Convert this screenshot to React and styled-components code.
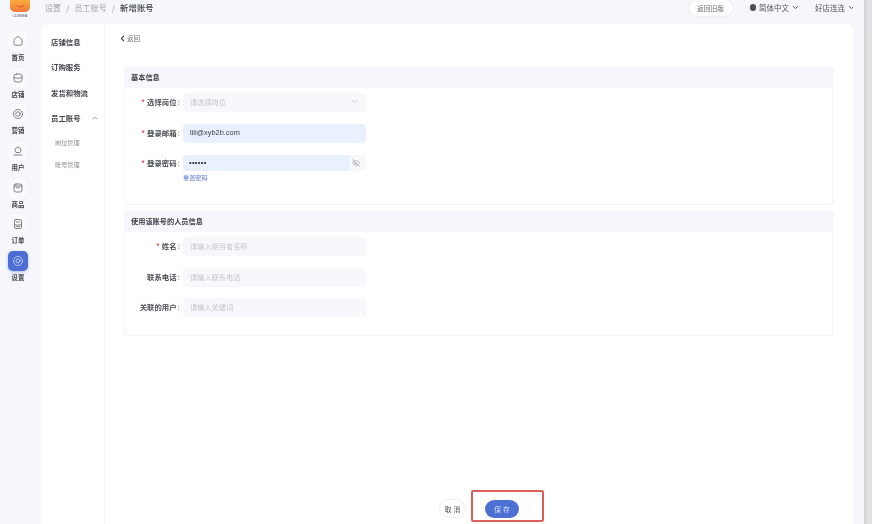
import React from "react";
import styled, { createGlobalStyle } from "styled-components";
import { ChevronDown, ChevronLeft, ChevronUp, EyeOff } from "lucide-react";

const Global = createGlobalStyle`
  html, body { margin: 0; padding: 0; width: 872px; height: 524px; overflow: hidden; background: #f6f7fc; }
  * { box-sizing: border-box; }
  #root { width: 872px; height: 524px; }
`;

const Page = styled.div`
  display: flex; width: 872px; height: 524px; overflow: hidden; background: #f6f7fc;
  font-family: "Noto Sans CJK SC", "Liberation Sans", sans-serif; color: #3c4048;
  filter: blur(0.5px);
`;
const Sidebar = styled.aside`
  width: 41px; flex: none; display: flex; flex-direction: column; align-items: center;
`;
const Logo = styled.div`
  width: 20px; height: 12px; margin-left: -1px; border-radius: 0 0 5px 5px;
  background: linear-gradient(180deg, #f8aa3c, #f2793a); display: flex; align-items: center; justify-content: center;
`;
const LogoText = styled.div`
  height: 6px; margin: 1px 0 12px -1px; font-size: 3.6px; line-height: 6px; color: #555; font-weight: 500;
  font-family: "Liberation Sans", sans-serif;
`;
const SideItem = styled.div`
  height: 36.7px; display: flex; flex-direction: column; align-items: center; margin-left: -5px;
`;
const Tile = styled.div`
  width: 20px; height: 20px; border-radius: 5px; display: flex; align-items: center; justify-content: center;
  background: ${p => (p.$active ? "#4c6dd3" : "#f9fafe")};
  color: ${p => (p.$active ? "#c8d3f5" : "#6b6f76")};
  box-shadow: ${p => (p.$active ? "0 1px 3px rgba(76,109,211,.45)" : "0 0 2px rgba(120,130,160,.1)")};
`;
const SideLabel = styled.div`
  margin-top: 2px; font-size: 6.4px; line-height: 9px; color: #3f434a; font-weight: 600;
`;
const Main = styled.div`
  width: 812px; flex: none; display: flex; flex-direction: column;
`;
const TopBar = styled.header`
  height: 24px; flex: none; display: flex; align-items: flex-start; font-size: 8px; line-height: 15px;
`;
const Crumbs = styled.nav`
  margin-left: 4px; flex: 1; display: flex; gap: 5px; letter-spacing: .1px; color: #a0a4ab;
`;
const CrumbNow = styled.span`
  color: #3f434a; font-weight: 500; font-size: 8.3px;
`;
const OldButton = styled.div`
  width: 44px; height: 16px; border-radius: 8px; background: #fff; text-align: center; font-size: 6.8px;
  line-height: 16px; color: #6a6e75; box-shadow: 0 0 2px rgba(80,90,120,.18); margin-right: 17px;
`;
const Menu = styled.div`
  display: flex; align-items: center; gap: 2px; height: 15px; font-size: 7.5px; color: #55595f; margin-right: ${p => p.$gap}px;
`;
const Dot = styled.span`
  width: 6.5px; height: 6.5px; border-radius: 50%; background: #4a4e58; margin-right: 1px;
`;
const Panel = styled.main`
  flex: 1; display: flex; background: #fff; border-radius: 7px 7px 0 0; min-height: 0;
`;
const SubNav = styled.nav`
  width: 64px; flex: none; border-right: 1px solid #f5f6f9; padding: 12px 0 0 10px;
`;
const NavItem = styled.div`
  height: 25.4px; font-size: 7.4px; line-height: 11px; font-weight: 600; color: #42464d; display: flex; gap: 10px;
`;
const NavChild = styled.div`
  height: 22px; padding: 0 0 0 4px; font-size: 6.2px; line-height: 10px; color: #8d9197;
`;
const Content = styled.section`
  flex: 1; display: flex; flex-direction: column; padding: 9px 20px 0 19px; min-width: 0;
`;
const Back = styled.div`
  height: 10px; margin-left: -6px; display: flex; align-items: center; font-size: 6.6px; color: #6d7177;
  margin-bottom: 24px;
`;
const Card = styled.div`
  height: ${p => p.$h}px; flex: none; border: 1px solid #f3f4f8; border-radius: 3px; margin-bottom: 6px; overflow: hidden;
`;
const CardHead = styled.div`
  height: 20px; background: #f6f7fb; padding-left: 6px; font-size: 7.2px; font-weight: 700; line-height: 19px; color: #3c4048;
`;
const Rows = styled.div`
  padding-top: ${p => p.$top}px; display: flex; flex-direction: column;
`;
const Row = styled.div`
  display: flex; align-items: flex-start; height: ${p => p.$h}px;
`;
const Label = styled.label`
  width: 58px; flex: none; text-align: right; padding-top: ${p => p.$pt || 3}px; padding-right: 3px; font-size: 7.4px; line-height: 11px; color: #4b4f56; font-weight: 600;
`;
const Star = styled.span`
  color: #e5525c; margin-right: 2px;
`;
const Colon = styled.span`
  color: #a7abb2; margin-left: 1px;
`;
const Field = styled.div`
  width: ${p => p.$w || 183}px; height: ${p => p.$h || 19}px; padding: 0 7px 2px; border-radius: 4px; display: flex; align-items: center; justify-content: space-between;
  font-size: ${p => (p.$value ? 7.4 : 7.2)}px; color: ${p => (p.$value ? "#3d4046" : "#c3c6cc")}; background: ${p => (p.$value ? "#e9f1fe" : "#f7f8fb")};
  font-family: ${p => (p.$value ? '"Liberation Sans", sans-serif' : "inherit")};
`;
const PasswordWrap = styled.div`
  width: 183px; display: flex; flex-direction: column;
`;
const PasswordBox = styled.div`
  height: 16px; border-radius: 4px; background: #f7f8fb; display: flex; align-items: center; color: #909399;
`;
const PasswordValue = styled.div`
  width: 167px; height: 16px; padding-left: 6px; background: #e9f1fe; border-radius: 4px 0 0 4px; color: #30343a;
  font: 700 7.5px/16px "Liberation Sans", sans-serif; letter-spacing: .3px; margin-right: 2px;
`;
const ResetLink = styled.a`
  font-size: 6.2px; line-height: 9px; color: #5b78cf; margin-top: 2px;
`;
const Spacer = styled.div`
  flex: 1;
`;
const Footer = styled.footer`
  height: 35px; flex: none; display: flex; align-items: flex-start; justify-content: flex-start; padding: 1px 0 0 315px;
`;
const CancelButton = styled.button`
  width: 27px; height: 19px; margin: 9px 0 0 0; padding: 0; border: 1px solid #eeeff3; border-radius: 10px; background: #fff; color: #62666c;
  font: 500 6.8px "Noto Sans CJK SC", sans-serif; letter-spacing: 2px; text-indent: 2px;
`;
const Highlight = styled.div`
  position: relative; width: 73px; height: 32px; margin-left: 5px; border: 2px solid #dc5f5c; border-radius: 2px; padding: 8px 0 0 12px;
  background: #fff;
`;
const SaveButton = styled.button`
  display: block; width: 34px; height: 18px; padding: 0; border: 0; border-radius: 9px; background: #4d70d3; color: #c9d4f5;
  font: 500 6.8px "Noto Sans CJK SC", sans-serif; letter-spacing: 2px; text-indent: 2px;
`;
const Gutter = styled.div`
  width: 11px; flex: none; background: #f7f7fd;
`;
const Edge = styled.div`
  width: 8px; flex: none; background: linear-gradient(90deg, #cfcfd1, #e3e3e5 45%, #dedee0);
`;

const stroke = { fill: "none", stroke: "currentColor", strokeWidth: 1.7, strokeLinecap: "round", strokeLinejoin: "round" };
const icons = {
  home: <path d="M4 10c0-2 5-6.500 8-6.500S20 8 20 10v8a2.500 2.500 0 0 1-2.500 2.500h-11A2.500 2.500 0 0 1 4 18Z" />,
  shop: <><rect x="4" y="4" width="16" height="16" rx="5" /><path d="M4 11c4 2 12 2 16 0" /></>,
  market: <><circle cx="12" cy="12" r="9" /><circle cx="12" cy="12" r="4.500" /></>,
  user: <><path d="M7.500 14.500a6 6 0 1 1 9 0Z" /><path d="M4 20h16" /></>,
  goods: <><rect x="4" y="4" width="16" height="16" rx="4" /><path d="M8 10c1 3 7 3 8 0M4 8h16" /></>,
  order: <><rect x="5" y="3" width="14" height="18" rx="3" /><path d="M5 14h14M9 8h6M9 17h6" /></>,
  settings: <><circle cx="12" cy="12" r="9" /><circle cx="12" cy="12" r="4" /></>,
};
const Icon = ({ name }) => <svg width="12" height="12" viewBox="0 0 24 24" {...stroke}>{icons[name]}</svg>;

const sideItems = [
  ["home", "首页"], ["shop", "店铺"], ["market", "营销"], ["user", "用户"],
  ["goods", "商品"], ["order", "订单"], ["settings", "设置", true],
];

export default function App() {
  return (
    <Page>
      <Global />
      <Sidebar>
        <Logo>
          <svg width="9" height="4" viewBox="0 0 9 4"><path d="M1 1c1.200 2.400 5.800 2.400 7 0" fill="none" stroke="#e0452f" strokeWidth="1" /></svg>
        </Logo>
        <LogoText>CDSBEA</LogoText>
        {sideItems.map(([icon, label, active]) => (
          <SideItem key={label}>
            <Tile $active={active}><Icon name={icon} /></Tile>
            <SideLabel>{label}</SideLabel>
          </SideItem>
        ))}
      </Sidebar>
      <Main>
        <TopBar>
          <Crumbs>
            <span>设置</span><span>/</span><span>员工账号</span><span>/</span><CrumbNow>新增账号</CrumbNow>
          </Crumbs>
          <OldButton>返回旧版</OldButton>
          <Menu $gap={15}><Dot />简体中文<ChevronDown size={9} strokeWidth={2.6} /></Menu>
          <Menu $gap={-3}>好店连连<ChevronDown size={9} strokeWidth={2.6} /></Menu>
        </TopBar>
        <Panel>
          <SubNav>
            <NavItem>店铺信息</NavItem>
            <NavItem>订购服务</NavItem>
            <NavItem>发货和物流</NavItem>
            <NavItem>员工账号<ChevronUp size={8} color="#70747a" style={{ marginTop: 2 }} /></NavItem>
            <NavChild>岗位管理</NavChild>
            <NavChild>账号管理</NavChild>
          </SubNav>
          <Content>
            <Back><ChevronLeft size={9} strokeWidth={3} color="#3f434a" />返回</Back>
            <Card $h={138}>
              <CardHead>基本信息</CardHead>
              <Rows $top={5}>
                <Row $h={31}>
                  <Label><Star>*</Star>选择岗位<Colon>:</Colon></Label>
                  <Field>请选择岗位<ChevronDown size={9} color="#b9bcc3" /></Field>
                </Row>
                <Row $h={31}>
                  <Label><Star>*</Star>登录邮箱<Colon>:</Colon></Label>
                  <Field $value>lili@xyb2b.com</Field>
                </Row>
                <Row $h={40}>
                  <Label $pt={2}><Star>*</Star>登录密码<Colon>:</Colon></Label>
                  <PasswordWrap>
                    <PasswordBox>
                      <PasswordValue>••••••</PasswordValue>
                      <EyeOff size={8} />
                    </PasswordBox>
                    <ResetLink>重置密码</ResetLink>
                  </PasswordWrap>
                </Row>
              </Rows>
            </Card>
            <Card $h={125}>
              <CardHead>使用该账号的人员信息</CardHead>
              <Rows $top={5}>
                <Row $h={31}>
                  <Label><Star>*</Star>姓名<Colon>:</Colon></Label>
                  <Field>请输入使用者名称</Field>
                </Row>
                <Row $h={30}>
                  <Label>联系电话<Colon>:</Colon></Label>
                  <Field>请输入联系电话</Field>
                </Row>
                <Row $h={30}>
                  <Label>关联的用户<Colon>:</Colon></Label>
                  <Field $w={184}>请输入关键词</Field>
                </Row>
              </Rows>
            </Card>
            <Spacer />
            <Footer>
              <CancelButton>取消</CancelButton>
              <Highlight><SaveButton>保存</SaveButton></Highlight>
            </Footer>
          </Content>
        </Panel>
      </Main>
      <Gutter />
      <Edge />
    </Page>
  );
}
